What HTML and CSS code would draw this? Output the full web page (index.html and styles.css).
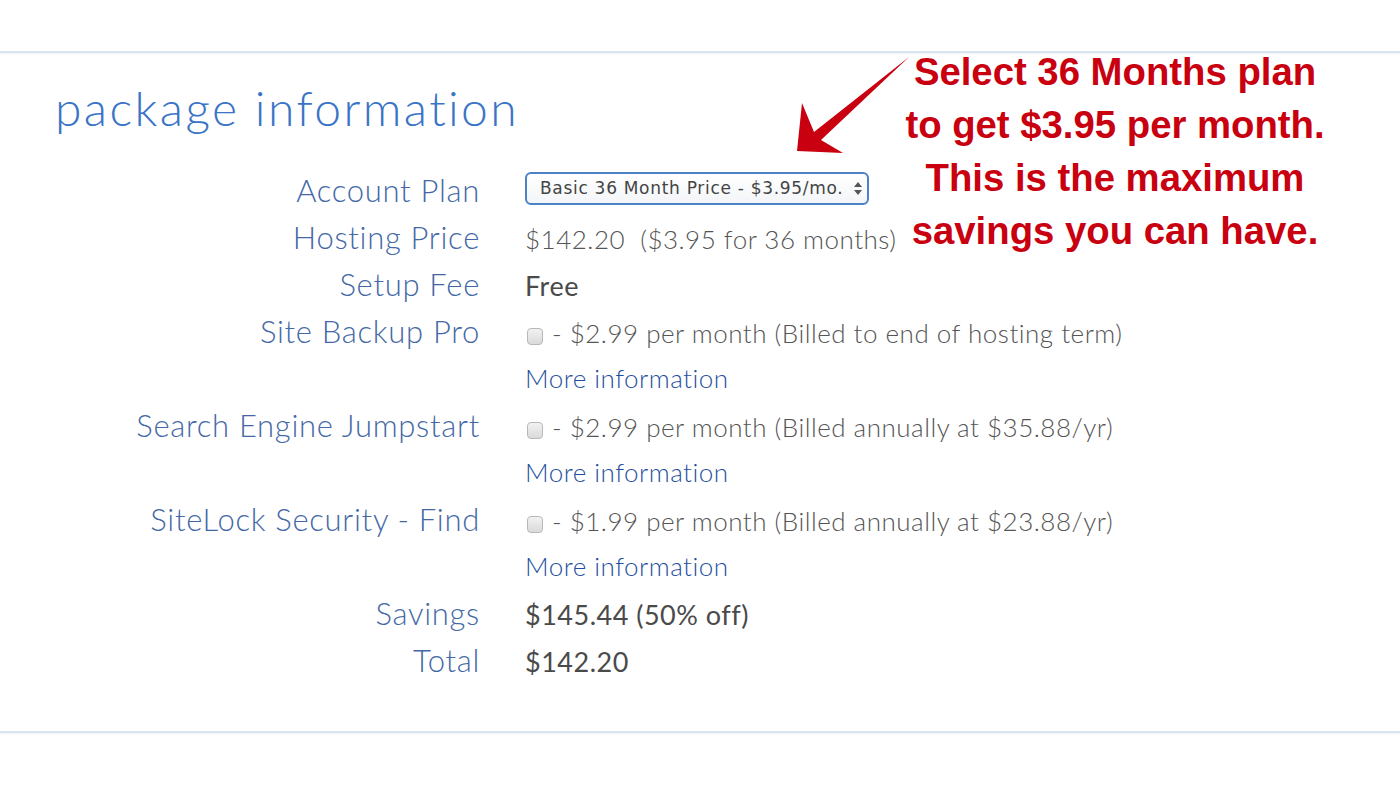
FILE: index.html
```html
<!DOCTYPE html>
<html lang="en">
<head>
<meta charset="utf-8">
<title>package information</title>
<link rel="stylesheet" href="styles.css">
</head>
<body>
<div class="page">
  <div class="rule rule-top"></div>
  <section class="panel">
    <h1 class="title">package information</h1>
    <div class="grid">
      <div class="label">Account Plan</div>
      <div class="value value-select">
        <div class="selectbox">
          <span class="selectbox-text">Basic 36 Month Price - $3.95/mo.</span>
          <svg class="selectbox-arrows" width="8" height="13" viewBox="0 0 8 13"><path d="M4 0 L8 5 H0 Z M4 13 L0 8 H8 Z" fill="#555"/></svg>
        </div>
      </div>

      <div class="label">Hosting Price</div>
      <div class="value">$142.20&nbsp;&nbsp;($3.95 for 36 months)</div>

      <div class="label">Setup Fee</div>
      <div class="value value-strong">Free</div>

      <div class="label">Site Backup Pro</div>
      <div class="value"><span class="check"></span> - $2.99 per month (Billed to end of hosting term)</div>
      <div class="label"></div>
      <div class="value"><a class="more" href="#">More information</a></div>

      <div class="label">Search Engine Jumpstart</div>
      <div class="value"><span class="check"></span> - $2.99 per month (Billed annually at $35.88/yr)</div>
      <div class="label"></div>
      <div class="value"><a class="more" href="#">More information</a></div>

      <div class="label">SiteLock Security - Find</div>
      <div class="value"><span class="check"></span> - $1.99 per month (Billed annually at $23.88/yr)</div>
      <div class="label"></div>
      <div class="value"><a class="more" href="#">More information</a></div>

      <div class="label">Savings</div>
      <div class="value value-strong">$145.44 (50% off)</div>

      <div class="label">Total</div>
      <div class="value value-strong">$142.20</div>
    </div>

    <svg class="callout-arrow" width="130" height="110" viewBox="790 50 130 110">
      <polygon points="909,57 821,140 843,153 797,151 802,103 814,132" fill="#c8000f"/>
    </svg>
    <div class="callout">Select 36 Months plan<br>to get $3.95 per month.<br>This is the maximum<br>savings you can have.</div>
  </section>
  <div class="rule rule-bottom"></div>
</div>
</body>
</html>
```

FILE: styles.css
```css
html, body {
  margin: 0;
  padding: 0;
  background: #ffffff;
}

body {
  font-family: Lato, "Open Sans", sans-serif;
  width: 1400px;
  height: 800px;
  overflow: hidden;
}

.page {
  padding-top: 51px;
}

.rule {
  height: 2px;
  background: #d9e6f0;
  box-shadow: 0 1px 0 #eef5fa;
}

.panel {
  position: relative;
  padding-top: 31px;
  height: 678px;
  box-sizing: border-box;
}

.title {
  margin: 0 0 35px 55px;
  font-size: 48px;
  line-height: 48px;
  font-weight: 300;
  color: #3a74c6;
  letter-spacing: 2.4px;
}

.grid {
  display: grid;
  grid-template-columns: 480px 1fr;
  grid-auto-rows: 47px;
  column-gap: 45px;
  align-items: baseline;
}

.label {
  text-align: right;
  font-size: 31px;
  line-height: 47px;
  font-weight: 300;
  letter-spacing: 0.7px;
  color: #4468a6;
  white-space: nowrap;
}

.value {
  font-size: 26px;
  line-height: 47px;
  font-weight: 300;
  letter-spacing: 0.5px;
  color: #555555;
  white-space: nowrap;
  display: flex;
  align-items: baseline;
}

.value-strong {
  font-weight: 400;
  font-size: 27px;
  letter-spacing: 0.5px;
  color: #4a4a4a;
}

.value-select {
  align-self: center;
  padding-bottom: 5px;
}

.selectbox {
  width: 344px;
  height: 33px;
  box-sizing: border-box;
  border: 2px solid #4b82c6;
  border-radius: 6px;
  background: linear-gradient(#ffffff, #f3f5f8);
  display: flex;
  align-items: center;
  justify-content: space-between;
  padding: 0 5px 0 13px;
  font-family: "DejaVu Sans", Verdana, sans-serif;
  font-weight: 400;
  font-size: 17px;
  line-height: 20px;
  letter-spacing: 0.7px;
  color: #444444;
}

.selectbox-arrows {
  display: block;
}

.check {
  display: inline-block;
  width: 16px;
  height: 17px;
  box-sizing: border-box;
  border: 1px solid #b8b8b8;
  border-radius: 4px;
  background: linear-gradient(#f2f2f2, #dadada);
  margin: 0 9px 0 2px;
  align-self: center;
  position: relative;
  top: 3px;
}

.more {
  color: #1f4f9e;
  text-decoration: none;
}

.callout {
  position: absolute;
  left: 865px;
  top: -8px;
  width: 500px;
  text-align: center;
  font-family: "Liberation Sans", Arial, sans-serif;
  font-weight: 700;
  font-size: 38.3px;
  line-height: 53px;
  color: #c8000f;
}

.callout-arrow {
  position: absolute;
  left: 790px;
  top: -3px;
}
```
